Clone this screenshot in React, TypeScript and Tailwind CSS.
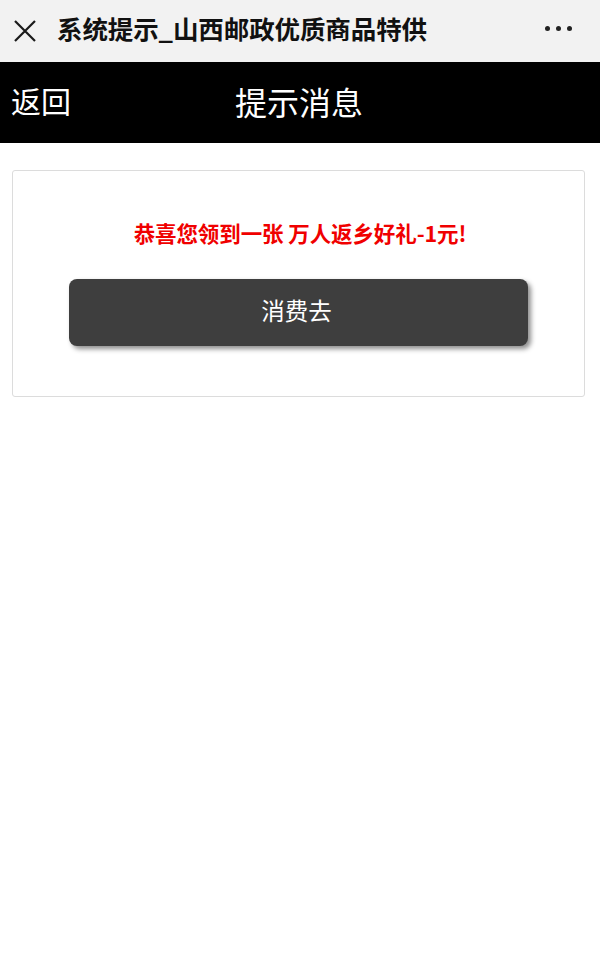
import React from "react";

export default function App() {
  const font = { fontFamily: '"Noto Sans CJK SC", "Noto Sans", sans-serif' };
  return (
    <div className="w-[600px] min-h-[953px] bg-white" style={font}>
      <div className="h-[62px] bg-[#f2f2f2] flex items-center">
        <div className="w-[52px] flex justify-center pr-[2px]">
          <svg width="24" height="24" viewBox="0 0 24 24">
            <path d="M2 2 L22 22 M22 2 L2 22" stroke="#1a1a1a" strokeWidth="2.2" fill="none" />
          </svg>
        </div>
        <div className="text-[25.5px] font-bold text-[#111] leading-none pl-[5px] -mt-[6px] flex-1 tracking-[-0.1px]">系统提示_山西邮政优质商品特供</div>
        <div className="flex gap-[6px] pr-[28px] -mt-[6px]">
          <span className="w-[5px] h-[5px] rounded-full bg-[#222]"></span>
          <span className="w-[5px] h-[5px] rounded-full bg-[#222]"></span>
          <span className="w-[5px] h-[5px] rounded-full bg-[#222]"></span>
        </div>
      </div>
      <div className="h-[81px] bg-black relative flex items-center justify-center">
        <span className="absolute left-[11px] top-[18px] text-white text-[30px] leading-[40px]">返回</span>
        <span className="text-white text-[32px] leading-[40px] -mt-[4px] -ml-[2px]">提示消息</span>
      </div>
      <div className="pl-[12px] pt-[27px]">
        <div className="w-[573px] border border-[#dcdcdc] rounded-[3px] h-[227px] flex flex-col items-center">
          <div className="mt-[47px] text-[21.5px] font-bold text-[#f00000] leading-[30px] tracking-[-0.1px] ml-[3px]">恭喜您领到一张 万人返乡好礼-1元!</div>
          <div className="mt-[31px] w-[459px] h-[67px] bg-[#3e3e3e] rounded-[8px] shadow-[3px_3px_5px_rgba(0,0,0,0.45)] flex items-center justify-center">
            <span className="text-white text-[23.5px] leading-none -mt-[3px] -ml-[4px]">消费去</span>
          </div>
        </div>
      </div>
    </div>
  );
}
